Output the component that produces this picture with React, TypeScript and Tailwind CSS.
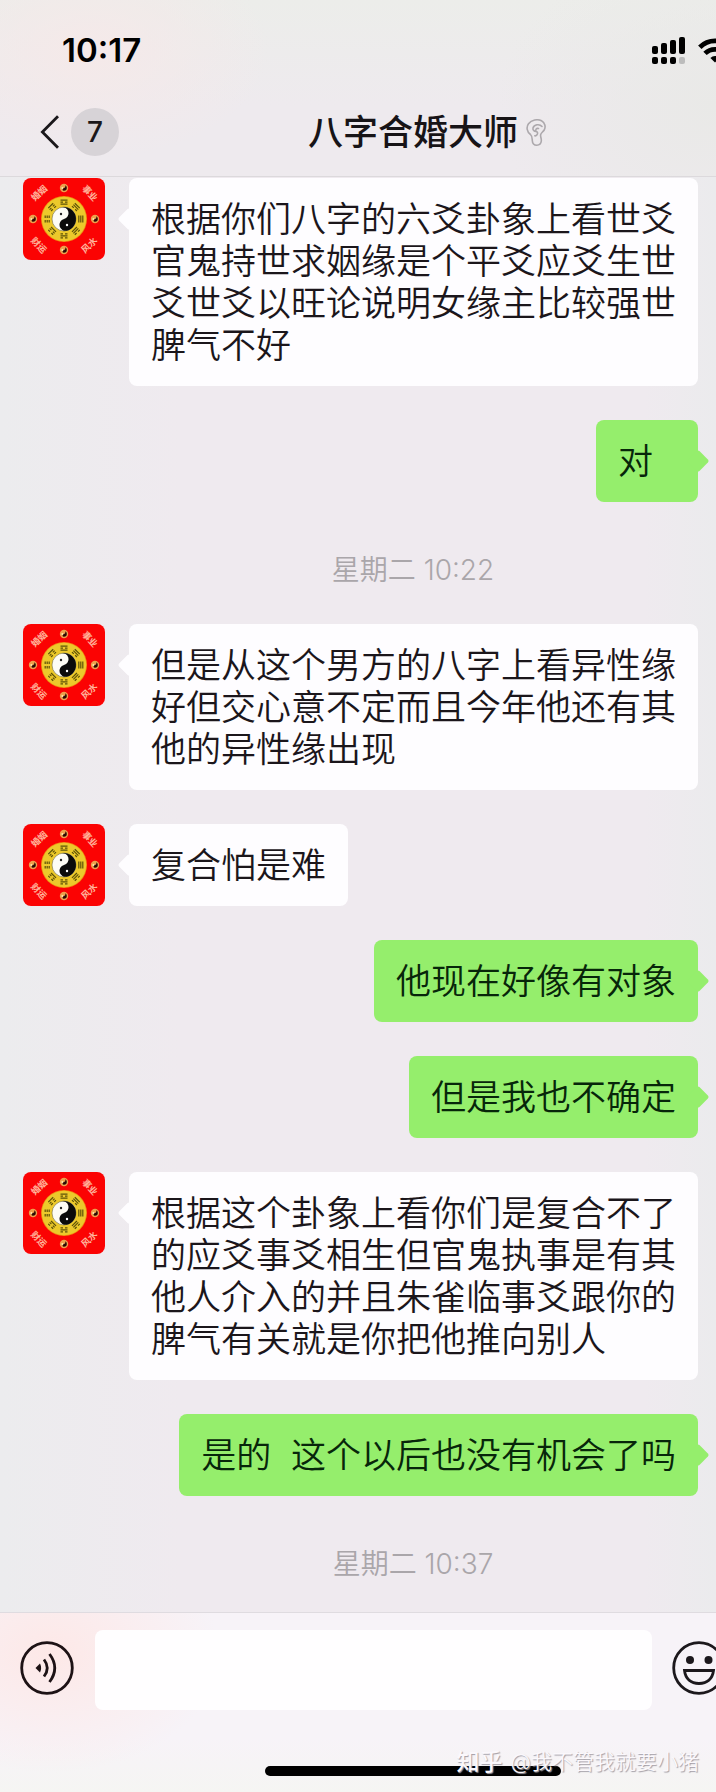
import React from "react";

type Entry =
  | { kind: "in" | "out"; text: string }
  | { kind: "time"; text: string };

const entries: Entry[] = [
  { kind: "in", text: "根据你们八字的六爻卦象上看世爻官鬼持世求姻缘是个平爻应爻生世爻世爻以旺论说明女缘主比较强世脾气不好" },
  { kind: "out", text: "对" },
  { kind: "time", text: "星期二 10:22" },
  { kind: "in", text: "但是从这个男方的八字上看异性缘好但交心意不定而且今年他还有其他的异性缘出现" },
  { kind: "in", text: "复合怕是难" },
  { kind: "out", text: "他现在好像有对象" },
  { kind: "out", text: "但是我也不确定" },
  { kind: "in", text: "根据这个卦象上看你们是复合不了的应爻事爻相生但官鬼执事是有其他人介入的并且朱雀临事爻跟你的脾气有关就是你把他推向别人" },
  { kind: "out", text: "是的  这个以后也没有机会了吗" },
  { kind: "time", text: "星期二 10:37" },
];

/* Each trigram from outer to inner line; 1 = solid, 0 = broken. */
const trigrams = ["101", "110", "111", "011", "010", "001", "000", "100"];

function Trigram({ lines, angle }: { lines: string; angle: number }) {
  return (
    <g transform={`rotate(${angle} 41 41)`} stroke="#5d5208" strokeWidth="1.2">
      {lines.split("").map((bit, i) => {
        const y = 22.2 + i * 2;
        return bit === "1" ? (
          <path key={i} d={`M37.5 ${y}h7`} />
        ) : (
          <path key={i} d={`M37.5 ${y}h2.5M42 ${y}h2.5`} />
        );
      })}
    </g>
  );
}

function Avatar() {
  const corners = [
    { text: "婚姻", x: 16, y: 15, angle: -42 },
    { text: "事业", x: 67, y: 15, angle: 48 },
    { text: "财运", x: 16, y: 67, angle: 46 },
    { text: "风水", x: 66, y: 67, angle: -44 },
  ];
  const dots = [
    [41, 10],
    [72, 41],
    [41, 72],
    [10, 41],
  ];
  return (
    <svg viewBox="0 0 82 82" className="size-[82px] shrink-0 rounded-lg" role="img" aria-label="八字合婚大师">
      <rect width="82" height="82" fill="#fb0303" />
      {corners.map((c) => (
        <text
          key={c.text}
          transform={`translate(${c.x} ${c.y}) rotate(${c.angle})`}
          textAnchor="middle"
          dominantBaseline="central"
          fontSize="9"
          fontWeight="700"
          fill="#ffb59c"
          fontFamily="Noto Sans CJK SC, sans-serif"
        >
          {c.text}
        </text>
      ))}
      {dots.map(([x, y]) => (
        <g key={`${x}-${y}`}>
          <circle cx={x} cy={y} r="4.2" fill="#eda04c" />
          <path d={`M${x} ${y - 2.8}a2.8 2.8 0 0 1 0 5.6a1.4 1.4 0 0 1 0-2.8a1.4 1.4 0 0 0 0-2.8z`} fill="#2b0a05" />
          <circle cx={x - 1.6} cy={y} r="1" fill="#ffe9b0" />
        </g>
      ))}
      <circle cx="41" cy="41" r="23" fill="#f08a10" />
      <circle cx="41" cy="41" r="22.2" fill="#ecc92b" />
      {trigrams.map((t, i) => (
        <Trigram key={t} lines={t} angle={i * 45} />
      ))}
      <circle cx="41" cy="41" r="12" fill="#fdfcf5" stroke="#6f6a40" strokeWidth="0.6" />
      <path d="M41 29A12 12 0 0 1 41 53A6 6 0 0 1 41 41A6 6 0 0 0 41 29z" fill="#0b0b0b" transform="rotate(-14 41 41)" />
      <circle cx="38" cy="36" r="1.2" fill="#222" />
      <circle cx="44" cy="47" r="1.2" fill="#fff" />
    </svg>
  );
}

function Incoming({ text }: { text: string }) {
  return (
    <div className="flex items-start gap-6 pl-[23px] pr-[18px]">
      <Avatar />
      <p className="relative rounded-lg bg-[#fefdff] px-[22px] py-5 text-[35px] font-[350] leading-[42px] text-[#1b161b] before:absolute before:-left-2 before:top-[33px] before:size-4 before:rotate-45 before:rounded-xs before:bg-[#fefdff]">
        {text}
      </p>
    </div>
  );
}

function Outgoing({ text }: { text: string }) {
  return (
    <div className="flex justify-end pl-[129px] pr-[18px]">
      <p className="relative min-w-[102px] whitespace-pre-wrap rounded-lg bg-[#95ee6c] px-[22px] py-5 text-[35px] font-[350] leading-[42px] text-[#07260a] before:absolute before:-right-2 before:top-[33px] before:size-4 before:rotate-45 before:rounded-xs before:bg-[#95ee6c]">
        {text}
      </p>
    </div>
  );
}

function StatusIcons() {
  return (
    <div className="-mr-4 flex items-center gap-3">
      <svg viewBox="0 0 34 27" className="h-[27px] w-[34px]" aria-hidden="true">
        <rect x="0" y="9" width="6" height="8" rx="2" />
        <rect x="9" y="6" width="6" height="11" rx="2" />
        <rect x="18" y="3" width="6" height="14" rx="2" />
        <rect x="27" y="0" width="6" height="17" rx="2" />
        <rect x="0" y="20" width="6" height="7" rx="2" />
        <rect x="9" y="20" width="6" height="7" rx="2" />
        <rect x="18" y="20" width="6" height="7" rx="2" />
        <rect x="27" y="20" width="6" height="7" rx="2" fill="#bcbcbc" />
      </svg>
      <svg viewBox="0 0 34 25" className="h-[25px] w-[34px]" fill="none" stroke="#000" strokeWidth="4.8" aria-hidden="true">
        <path d="M1.8 9.2a21.5 21.5 0 0 1 30.4 0" />
        <path d="M7 15.400a14.3 14.3 0 0 1 20 0" />
        <path d="M17 24.5l-4.600-4.600a6.500 6.500 0 0 1 9.200 0z" fill="#000" stroke="none" />
      </svg>
    </div>
  );
}

function Header() {
  return (
    <header className="border-b border-[#dcd9dc] bg-[radial-gradient(ellipse_180px_110px_at_90px_50px,#f5e9e9,transparent),radial-gradient(ellipse_220px_160px_at_100%_60%,#e9e9e7,transparent),linear-gradient(#ecedea,#eeeaee_60%)]">
      <div className="flex h-[88px] items-center justify-between pl-[62px] pt-3">
        <time className="text-[33px] font-semibold leading-10 text-black">10:17</time>
        <StatusIcons />
      </div>
      <div className="grid h-[88px] grid-cols-[1fr_auto_1fr] items-center pl-10">
        <button type="button" aria-label="返回" className="flex items-center gap-3">
          <svg viewBox="0 0 19 34" className="h-[34px] w-[19px]" fill="none" stroke="#1a171a" strokeWidth="2.8" aria-hidden="true">
            <path d="M18 1.2L2.4 17L18 32.8" />
          </svg>
          <span className="flex size-12 items-center justify-center rounded-full bg-[#d7d3d7] text-[28px] font-medium leading-8 text-[#1a171a]">7</span>
        </button>
        <h1 className="flex items-center gap-2 pl-[98px] text-[35px] font-medium leading-[42px] text-[#171417]">
          八字合婚大师
          <svg viewBox="0 0 20 27" className="h-[27px] w-5" fill="none" stroke="#aca8ac" strokeWidth="1.6" strokeLinecap="round" strokeLinejoin="round" aria-hidden="true">
            <path d="M4.500 15.500C.8 13 .1 8 2.500 4.800C5.500.8 11.500-.2 15.500 1.800C19 3.600 20 8 18.200 11C17 13 15 13.800 14.600 15.800C14.300 18 15.600 19.500 15.300 22C15 24.800 13.300 26.200 10.800 26.200C7.800 26.200 6.400 24 6.300 21.500C6.200 19 6.300 17 4.500 15.500z" />
            <path d="M16 7.500C13.500 4.500 8 5.500 7 9C6.600 11 8 12.300 10 12.400C11.800 12.800 12 14.500 11 15.800C10.300 16.800 9.500 17 8.800 16.800M10 12.400C9.200 10.500 10.500 9 12.500 9.500" />
          </svg>
        </h1>
      </div>
    </header>
  );
}

function Footer() {
  return (
    <footer className="relative border-t border-[#dfdbe0] bg-[radial-gradient(ellipse_170px_120px_at_50px_40px,#fde8e7,transparent),linear-gradient(#f7f3f8_70%,#f5f5f3)] pb-4 pt-[17px]">
      <div className="flex items-center pl-5">
        <button type="button" aria-label="语音" className="shrink-0 pb-1">
          <svg viewBox="0 0 54 54" className="size-[54px]" fill="none" stroke="#1d1215" strokeWidth="2.8" aria-hidden="true">
            <circle cx="27" cy="27" r="25.3" />
            <path d="M15.5 27L20 22.5Q22.2 27 20 31.5z" fill="#1d1215" stroke="none" />
            <path d="M24 18.5Q30.500 27 24 35.5" />
            <path d="M29.5 13Q40 27 29.5 41" />
          </svg>
        </button>
        <input type="text" aria-label="消息" className="ml-[21px] h-20 min-w-0 flex-1 rounded-lg bg-[#fffeff] px-5 text-[35px] outline-none" />
        <button type="button" aria-label="表情" className="-mr-[10px] ml-5 shrink-0 pb-1">
          <svg viewBox="0 0 54 54" className="size-[54px]" fill="none" stroke="#1c181c" strokeWidth="2.8" aria-hidden="true">
            <circle cx="27" cy="27" r="25.3" />
            <circle cx="18" cy="19" r="4" fill="#1c181c" stroke="none" />
            <circle cx="36.5" cy="19" r="4" fill="#1c181c" stroke="none" />
            <path d="M12.5 29.5h29C40.5 38 35 42.5 27 42.5S13.5 38 12.5 29.5z" />
          </svg>
        </button>
      </div>
      <div className="ml-[37%] mt-14 h-[10px] w-[296px] rounded-full bg-black" />
      <p className="absolute bottom-4 right-[17px] flex items-center gap-2 text-[21px] font-[350] leading-7 text-[#fbf8fc] [text-shadow:1px_1px_1px_#a29ea6]">
        <span className="text-[23px] font-medium">知乎</span>
        <span>@我不管我就要小猪</span>
      </p>
    </footer>
  );
}

export default function App() {
  return (
    <div className="flex min-h-screen flex-col overflow-hidden bg-[#eeeaee] font-['Inter','Noto_Sans_CJK_SC',sans-serif]">
      <Header />
      <main className="flex flex-1 flex-col gap-[34px] bg-[linear-gradient(90deg,#ececee,#efeaef_25%,#efeaef_90%,#ebebed)] pb-7 pt-px">
        {entries.map((e, i) => {
          if (e.kind === "in") return <Incoming key={i} text={e.text} />;
          if (e.kind === "out") return <Outgoing key={i} text={e.text} />;
          return (
            <time key={i} className="pl-[110px] pt-[14px] text-center text-[28px] font-[350] leading-10 text-[#aaa6aa]">
              {e.text}
            </time>
          );
        })}
      </main>
      <Footer />
    </div>
  );
}
